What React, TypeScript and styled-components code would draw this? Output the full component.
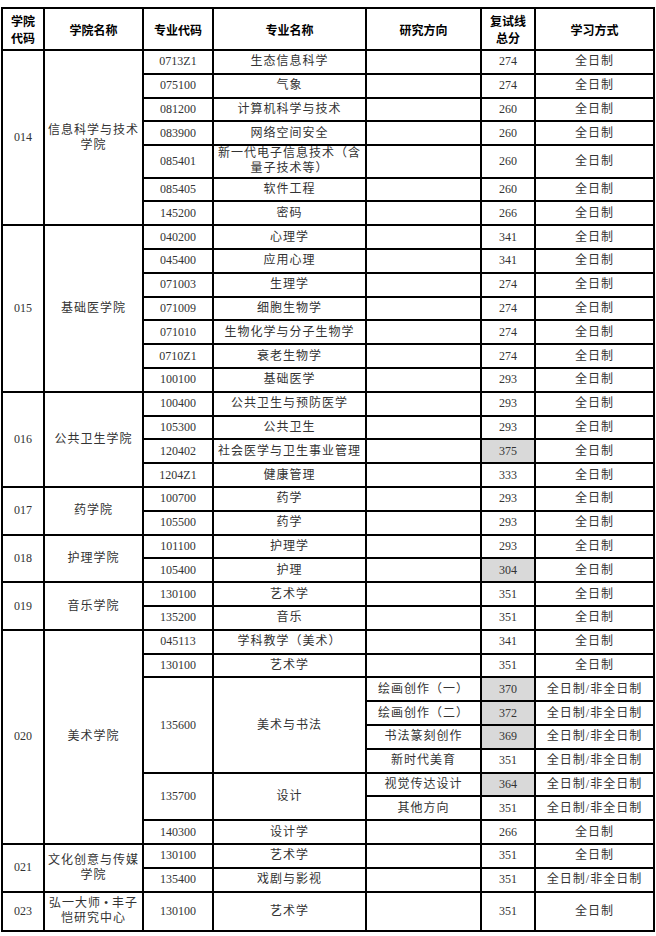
import React from 'react';
import styled, { createGlobalStyle } from 'styled-components';

const GlobalStyle = createGlobalStyle`
  html, body {
    margin: 0;
    padding: 0;
    background: #ffffff;
  }
  body {
    font-family: "Liberation Serif", "Noto Sans CJK SC", serif;
  }
`;

const Page = styled.div`
  width: 656px;
  padding: 7px 0 0 1px;
  box-sizing: border-box;
`;

const Table = styled.table`
  width: 652px;
  table-layout: fixed;
  border-collapse: collapse;
`;

const HeadCell = styled.th`
  height: 40px;
  border: 2px solid #000;
  padding: 0 2px;
  font-family: "Noto Sans CJK SC", sans-serif;
  font-size: 12px;
  font-weight: 700;
  line-height: 17px;
  color: #000;
  text-align: center;
  vertical-align: middle;
`;

const Cell = styled.td<{ $shade?: boolean; $h: number }>`
  height: ${(p) => p.$h}px;
  border: 2px solid #000;
  padding: 0 3px;
  font-size: 12px;
  line-height: 15px;
  letter-spacing: 1px;
  color: #333;
  text-align: center;
  vertical-align: middle;
  background: ${(p) => (p.$shade ? '#d9d9d9' : '#ffffff')};
`;

const Num = styled.span`
  letter-spacing: 0;
`;

const Dot = styled.span`
  margin: 0 3px;
`;

type Row = { dir?: string; score: number; shade?: boolean; part?: boolean };
type Major = { code: string; name: React.ReactNode; rows: Row[]; h?: number };
type School = { code: string; name: React.ReactNode; majors: Major[] };

const ROW_H = 21.8;
const full = (score: number, shade?: boolean): Row[] => [{ score, shade }];

const schools: School[] = [
  {
    code: '014',
    name: (
      <>
        信息科学与技术
        <br />
        学院
      </>
    ),
    majors: [
      { code: '0713Z1', name: '生态信息科学', rows: full(274) },
      { code: '075100', name: '气象', rows: full(274) },
      { code: '081200', name: '计算机科学与技术', rows: full(260) },
      { code: '083900', name: '网络空间安全', rows: full(260) },
      {
        code: '085401',
        name: (
          <>
            新一代电子信息技术（含
            <br />
            量子技术等）
          </>
        ),
        rows: full(260),
        h: 30.5,
      },
      { code: '085405', name: '软件工程', rows: full(260) },
      { code: '145200', name: '密码', rows: full(266) },
    ],
  },
  {
    code: '015',
    name: '基础医学院',
    majors: [
      { code: '040200', name: '心理学', rows: full(341) },
      { code: '045400', name: '应用心理', rows: full(341) },
      { code: '071003', name: '生理学', rows: full(274) },
      { code: '071009', name: '细胞生物学', rows: full(274) },
      { code: '071010', name: '生物化学与分子生物学', rows: full(274) },
      { code: '0710Z1', name: '衰老生物学', rows: full(274) },
      { code: '100100', name: '基础医学', rows: full(293) },
    ],
  },
  {
    code: '016',
    name: '公共卫生学院',
    majors: [
      { code: '100400', name: '公共卫生与预防医学', rows: full(293) },
      { code: '105300', name: '公共卫生', rows: full(293) },
      { code: '120402', name: '社会医学与卫生事业管理', rows: full(375, true) },
      { code: '1204Z1', name: '健康管理', rows: full(333) },
    ],
  },
  {
    code: '017',
    name: '药学院',
    majors: [
      { code: '100700', name: '药学', rows: full(293) },
      { code: '105500', name: '药学', rows: full(293) },
    ],
  },
  {
    code: '018',
    name: '护理学院',
    majors: [
      { code: '101100', name: '护理学', rows: full(293) },
      { code: '105400', name: '护理', rows: full(304, true) },
    ],
  },
  {
    code: '019',
    name: '音乐学院',
    majors: [
      { code: '130100', name: '艺术学', rows: full(351) },
      { code: '135200', name: '音乐', rows: full(351) },
    ],
  },
  {
    code: '020',
    name: '美术学院',
    majors: [
      { code: '045113', name: '学科教学（美术）', rows: full(341) },
      { code: '130100', name: '艺术学', rows: full(351) },
      {
        code: '135600',
        name: '美术与书法',
        rows: [
          { dir: '绘画创作（一）', score: 370, shade: true, part: true },
          { dir: '绘画创作（二）', score: 372, shade: true, part: true },
          { dir: '书法篆刻创作', score: 369, shade: true, part: true },
          { dir: '新时代美育', score: 351, part: true },
        ],
      },
      {
        code: '135700',
        name: '设计',
        rows: [
          { dir: '视觉传达设计', score: 364, shade: true, part: true },
          { dir: '其他方向', score: 351, part: true },
        ],
      },
      { code: '140300', name: '设计学', rows: full(266) },
    ],
  },
  {
    code: '021',
    name: (
      <>
        文化创意与传媒
        <br />
        学院
      </>
    ),
    majors: [
      { code: '130100', name: '艺术学', rows: full(351) },
      { code: '135400', name: '戏剧与影视', rows: [{ score: 351, part: true }] },
    ],
  },
  {
    code: '023',
    name: (
      <>
        弘一大师<Dot>•</Dot>丰子
        <br />
        恺研究中心
      </>
    ),
    majors: [{ code: '130100', name: '艺术学', rows: full(351), h: 37.5 }],
  },
];

const widths = [42, 99, 70, 153, 115, 54, 119];

function SchoolRows({ school }: { school: School }) {
  const total = school.majors.reduce((n, m) => n + m.rows.length, 0);
  const out: React.ReactNode[] = [];
  school.majors.forEach((major, mi) => {
    const h = major.h ?? ROW_H;
    major.rows.forEach((row, ri) => {
      out.push(
        <tr key={`${major.code}-${mi}-${ri}`}>
          {mi === 0 && ri === 0 && (
            <>
              <Cell rowSpan={total} $h={h}>
                <Num>{school.code}</Num>
              </Cell>
              <Cell rowSpan={total} $h={h}>
                {school.name}
              </Cell>
            </>
          )}
          {ri === 0 && (
            <>
              <Cell rowSpan={major.rows.length} $h={h}>
                <Num>{major.code}</Num>
              </Cell>
              <Cell rowSpan={major.rows.length} $h={h}>
                {major.name}
              </Cell>
            </>
          )}
          <Cell $h={h}>{row.dir ?? ''}</Cell>
          <Cell $shade={row.shade} $h={h}>
            <Num>{row.score}</Num>
          </Cell>
          <Cell $h={h}>{row.part ? '全日制/非全日制' : '全日制'}</Cell>
        </tr>
      );
    });
  });
  return <>{out}</>;
}

export default function App() {
  return (
    <Page>
      <GlobalStyle />
      <Table>
        <colgroup>
          {widths.map((w, i) => (
            <col key={i} style={{ width: w }} />
          ))}
        </colgroup>
        <thead>
          <tr>
            <HeadCell>
              学院
              <br />
              代码
            </HeadCell>
            <HeadCell>学院名称</HeadCell>
            <HeadCell>专业代码</HeadCell>
            <HeadCell>专业名称</HeadCell>
            <HeadCell>研究方向</HeadCell>
            <HeadCell>
              复试线
              <br />
              总分
            </HeadCell>
            <HeadCell>学习方式</HeadCell>
          </tr>
        </thead>
        <tbody>
          {schools.map((s) => (
            <SchoolRows key={s.code} school={s} />
          ))}
        </tbody>
      </Table>
    </Page>
  );
}
